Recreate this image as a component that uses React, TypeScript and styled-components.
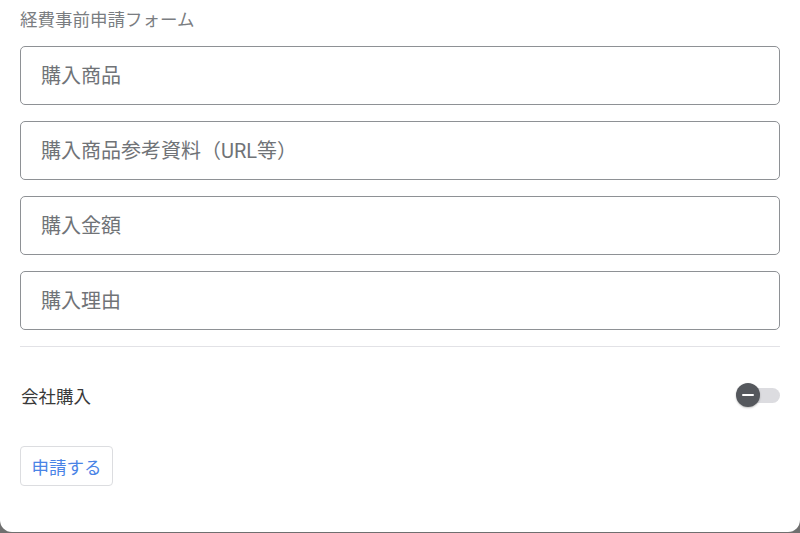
import React, { useState, FC } from "react";
import styled, { createGlobalStyle } from "styled-components";

const GlobalStyle = createGlobalStyle`
  html, body {
    margin: 0;
    padding: 0;
    background: #6f6f6f;
  }
  * {
    box-sizing: border-box;
  }
`;

const fields = [
  "購入商品",
  "購入商品参考資料（URL等）",
  "購入金額",
  "購入理由",
];

const App: FC = () => {
  const [values, setValues] = useState<string[]>(fields.map(() => ""));
  const [company, setCompany] = useState<boolean>(false);

  return (
    <>
      <GlobalStyle />
      <Card>
        <Title>経費事前申請フォーム</Title>
        <FieldList>
          {fields.map((label, i) => (
            <TextInput
              key={label}
              placeholder={label}
              value={values[i]}
              onChange={(e) => {
                const next = [...values];
                next[i] = e.target.value;
                setValues(next);
              }}
            />
          ))}
        </FieldList>
        <Divider />
        <ToggleRow>
          <ToggleLabel>会社購入</ToggleLabel>
          <Switch
            type="button"
            onClick={() => setCompany(!company)}
            aria-label="会社購入"
          >
            <Track $on={company} />
            <Knob $on={company}>
              <Minus />
            </Knob>
          </Switch>
        </ToggleRow>
        <SubmitBtn type="button">申請する</SubmitBtn>
      </Card>
    </>
  );
};

const Card = styled.div`
  background: #ffffff;
  min-height: 532px;
  border-radius: 0 0 12px 12px;
  padding: 8px 20px 0 20px;
  font-family: Roboto, "Noto Sans CJK JP", sans-serif;
  display: flex;
  flex-direction: column;
`;

const Title = styled.div`
  font-size: 17.5px;
  line-height: 24px;
  color: #7a7d81;
  height: 24px;
`;

const FieldList = styled.div`
  margin-top: 14px;
  display: flex;
  flex-direction: column;
  gap: 16px;
`;

const TextInput = styled.input`
  height: 59px;
  width: 100%;
  border: 1.5px solid #8e9195;
  border-radius: 5px;
  padding: 0 20px;
  font-family: Roboto, "Noto Sans CJK JP", sans-serif;
  font-size: 20px;
  color: #333;
  background: transparent;
  outline: none;

  &::placeholder {
    color: #707377;
  }
`;

const Divider = styled.div`
  margin-top: 16px;
  height: 1px;
  background: #e2e2e6;
`;

const ToggleRow = styled.div`
  height: 96px;
  display: flex;
  align-items: center;
  justify-content: space-between;
`;

const ToggleLabel = styled.span`
  font-size: 17.5px;
  color: #3a3a3a;
  padding-left: 1px;
`;

const Switch = styled.button`
  position: relative;
  width: 44px;
  height: 24px;
  border: none;
  padding: 0;
  background: transparent;
  cursor: pointer;
`;

const Track = styled.span<{ $on: boolean }>`
  position: absolute;
  right: 0;
  top: 4.5px;
  width: 34px;
  height: 15px;
  border-radius: 8px;
  background: ${(p) => (p.$on ? "#a9c6f5" : "#dcdce0")};
`;

const Knob = styled.span<{ $on: boolean }>`
  position: absolute;
  top: 0;
  left: ${(p) => (p.$on ? "20px" : "0")};
  width: 24px;
  height: 24px;
  border-radius: 50%;
  background: ${(p) => (p.$on ? "#3b78e7" : "#55585d")};
  box-shadow: 0 1px 2px rgba(0, 0, 0, 0.25);
  display: flex;
  align-items: center;
  justify-content: center;
`;

const Minus = styled.span`
  width: 12px;
  height: 2.5px;
  border-radius: 1px;
  background: #ffffff;
`;

const SubmitBtn = styled.button`
  margin-top: 3px;
  align-self: flex-start;
  width: 93px;
  height: 40px;
  border: 1px solid #dcdde0;
  border-radius: 4px;
  background: #ffffff;
  color: #4a84e6;
  font-family: Roboto, "Noto Sans CJK JP", sans-serif;
  font-size: 17.5px;
  cursor: pointer;
`;

export default App;
